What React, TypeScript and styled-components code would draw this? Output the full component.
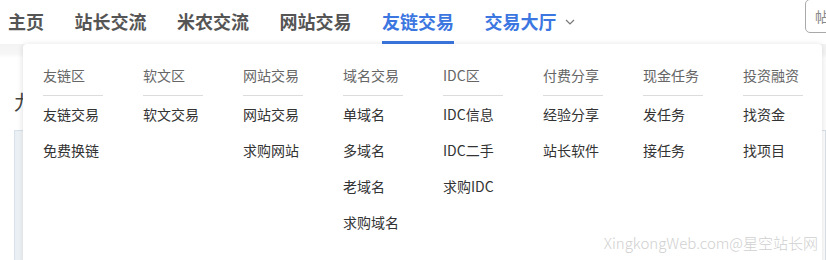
import React from "react";
import styled, { createGlobalStyle } from "styled-components";

const Global = createGlobalStyle`
  html, body { margin: 0; padding: 0; background: #fff; }
  body {
    font-family: "Noto Sans CJK SC", "Microsoft YaHei", "Noto Sans", sans-serif;
    width: 826px; height: 260px; overflow: hidden;
  }
`;

const Page = styled.div`
  position: relative;
  width: 826px;
  height: 260px;
  overflow: hidden;
`;

const Header = styled.header`
  display: flex;
  align-items: stretch;
  height: 44px;
  padding-left: 8px;
  background: #fff;
`;

const NavList = styled.nav`
  display: flex;
  gap: 30.5px;
  flex: 1;
`;

const NavItem = styled.a<{ $active?: boolean; $blue?: boolean }>`
  display: flex;
  align-items: center;
  gap: 8px;
  height: 41px;
  font-size: 18px;
  font-weight: 700;
  line-height: 20px;
  color: ${(p) => (p.$blue ? "#3b76e1" : "#555")};
  border-bottom: 3px solid ${(p) => (p.$active ? "#3b76e1" : "transparent")};
  text-decoration: none;
  box-sizing: content-box;
`;

const Search = styled.div`
  flex: none;
  align-self: flex-start;
  margin-top: -1px;
  margin-right: -60px;
  width: 70px;
  height: 32px;
  border: 1px solid #a9a9a9;
  border-radius: 5px;
  display: flex;
  align-items: center;
  padding-left: 9px;
  font-size: 14px;
  color: #888;
`;

const Body = styled.main`
  background: linear-gradient(#f3f3f3 0, #f7f7f7 10px, #fff 14px);
  padding: 46px 0 0 14px;
  height: 216px;
  box-sizing: border-box;
`;

const Title = styled.div`
  font-size: 20px;
  color: #444;
  line-height: 24px;
`;

const Panel = styled.div`
  margin-top: 16px;
  height: 140px;
  border: 1px solid #d9e2ea;
  background: linear-gradient(90deg, #e8eef3, #f4f7f9 9px, #fff 10px);
`;

const Dropdown = styled.div`
  position: absolute;
  top: 44px;
  left: 23px;
  width: 799px;
  height: 240px;
  background: #fff;
  border-radius: 4px;
  box-shadow: 0 1px 6px rgba(0, 0, 0, 0.14);
  display: flex;
  padding: 21px 0 0 20px;
  box-sizing: border-box;
`;

const Column = styled.div`
  width: 100px;
  flex: none;
`;

const ColHead = styled.div`
  width: 60px;
  font-size: 14px;
  line-height: 20px;
  color: #666;
  padding-bottom: 10px;
  border-bottom: 1px solid #dcdcdc;
  white-space: nowrap;
`;

const ColItem = styled.a`
  display: block;
  font-size: 14px;
  line-height: 36px;
  color: #333;
  white-space: nowrap;
  text-decoration: none;
`;

const Watermark = styled.div`
  position: absolute;
  right: 8px;
  bottom: 7px;
  font-size: 15px;
  line-height: 20px;
  font-weight: 300;
  color: #d0d0d0;
  font-family: "Noto Sans CJK SC", "Noto Sans", sans-serif;
  white-space: nowrap;
`;

const Chevron = () => (
  <svg width="10" height="6" viewBox="0 0 10 6" fill="none" style={{ marginTop: 3 }}>
    <path d="M1 1l4 4 4-4" stroke="#777" strokeWidth="1.2" />
  </svg>
);

const columns: { head: string; items: string[] }[] = [
  { head: "友链区", items: ["友链交易", "免费换链"] },
  { head: "软文区", items: ["软文交易"] },
  { head: "网站交易", items: ["网站交易", "求购网站"] },
  { head: "域名交易", items: ["单域名", "多域名", "老域名", "求购域名"] },
  { head: "IDC区", items: ["IDC信息", "IDC二手", "求购IDC"] },
  { head: "付费分享", items: ["经验分享", "站长软件"] },
  { head: "现金任务", items: ["发任务", "接任务"] },
  { head: "投资融资", items: ["找资金", "找项目"] },
];

export default function App() {
  return (
    <Page>
      <Global />
      <Header>
        <NavList>
          <NavItem>主页</NavItem>
          <NavItem>站长交流</NavItem>
          <NavItem>米农交流</NavItem>
          <NavItem>网站交易</NavItem>
          <NavItem $blue $active>友链交易</NavItem>
          <NavItem $blue>
            交易大厅
            <Chevron />
          </NavItem>
        </NavList>
        <Search>帖</Search>
      </Header>
      <Body>
        <Title>九</Title>
        <Panel />
      </Body>
      <Dropdown>
        {columns.map((c) => (
          <Column key={c.head}>
            <ColHead>{c.head}</ColHead>
            {c.items.map((i) => (
              <ColItem key={i}>{i}</ColItem>
            ))}
          </Column>
        ))}
      </Dropdown>
      <Watermark>XingkongWeb.com@星空站长网</Watermark>
    </Page>
  );
}
